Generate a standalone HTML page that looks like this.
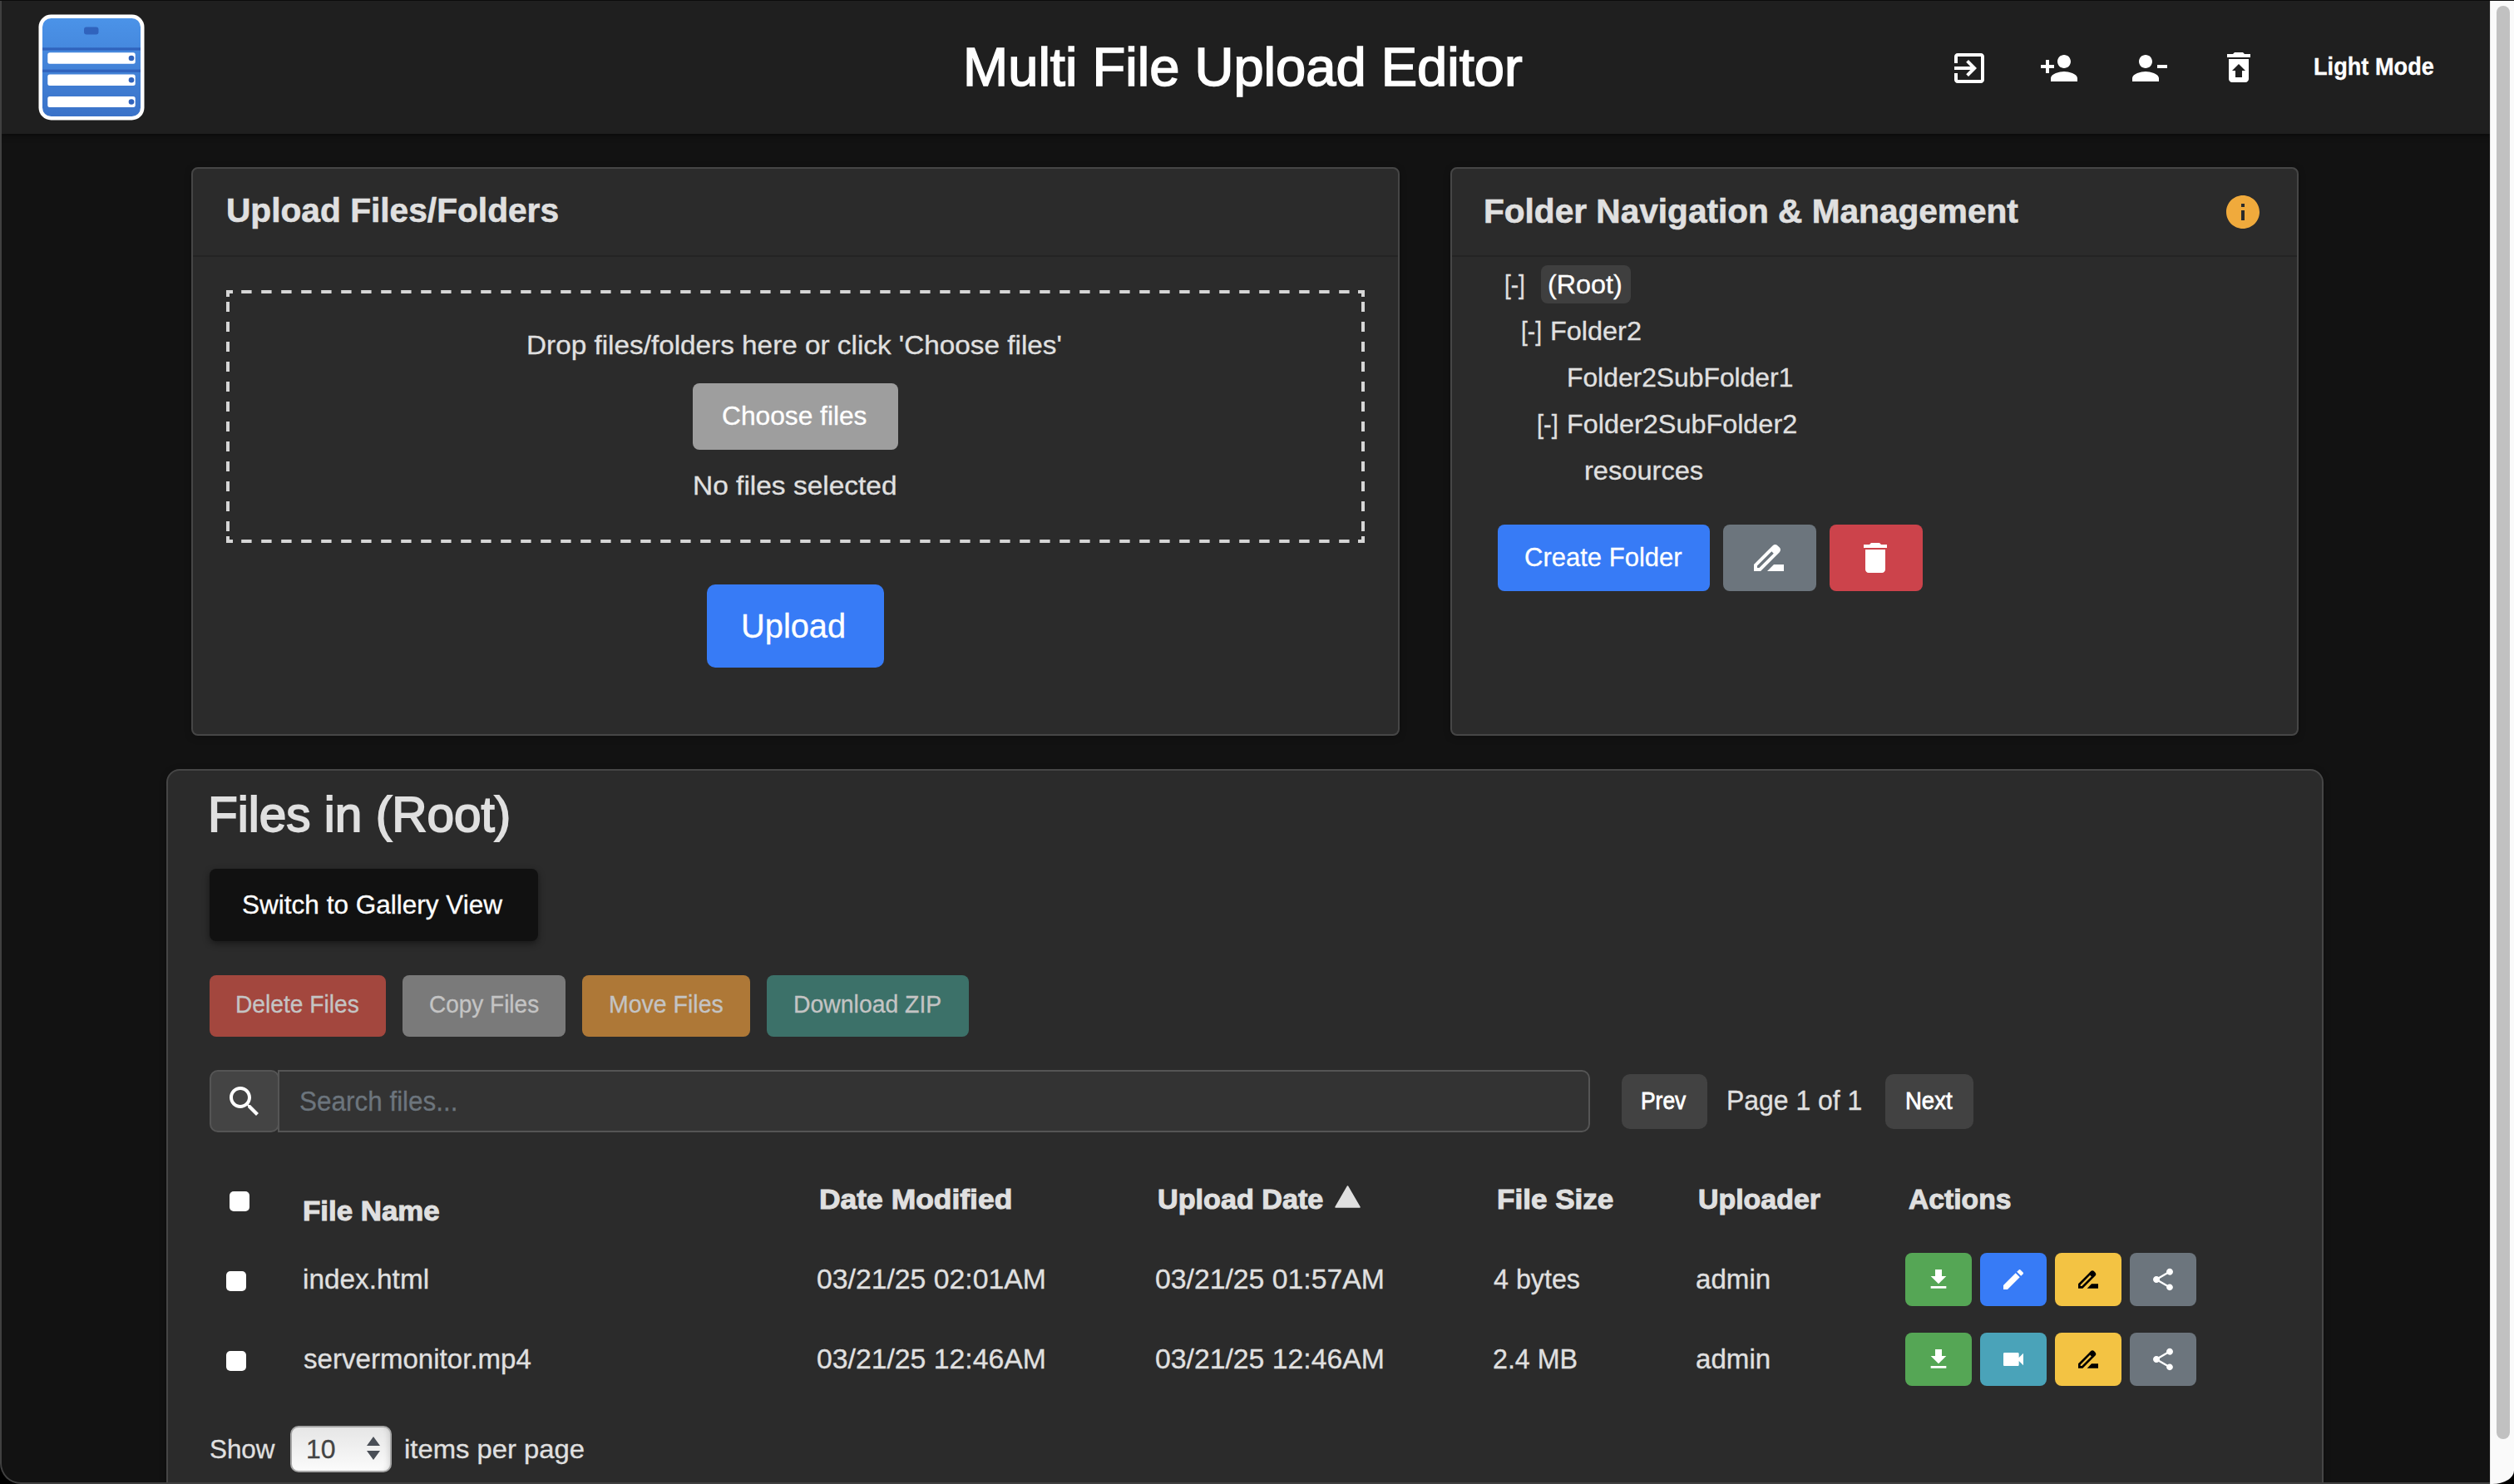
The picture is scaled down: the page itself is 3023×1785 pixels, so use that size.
<!DOCTYPE html>
<html><head><meta charset="utf-8"><title>Multi File Upload Editor</title>
<style>
html,body{margin:0;padding:0;}
body{width:3023px;height:1785px;overflow:hidden;position:relative;background:#121212;font-family:"Liberation Sans",sans-serif;}
body>div{position:absolute;}
.t{white-space:nowrap;-webkit-text-stroke-width:0.3px;}
</style></head><body>
<div style="left:2px;top:1px;width:2992px;height:160px;background:#1f1f1f;box-shadow:0 2px 6px rgba(0,0,0,.5);"></div>
<svg style="position:absolute;left:46px;top:17px" width="128" height="128" viewBox="0 0 128 128">
<defs><linearGradient id="lg" x1="0" y1="0" x2="0" y2="1"><stop offset="0" stop-color="#4b93e8"/><stop offset="1" stop-color="#3a72c8"/></linearGradient></defs>
<rect x="0.5" y="0.5" width="127" height="127" rx="15" fill="#fff"/>
<rect x="5" y="5" width="118" height="118" rx="10.5" fill="url(#lg)"/>
<rect x="55" y="15.5" width="17.5" height="9" rx="3" fill="#3063bd"/>
<rect x="5" y="40.3" width="118" height="3.3" fill="#3063bd"/>
<rect x="5" y="66.6" width="118" height="3.3" fill="#3063bd"/>
<rect x="11.3" y="46.3" width="105.4" height="13.5" rx="2.5" fill="#fff"/>
<rect x="11.3" y="72.6" width="105.4" height="13.5" rx="2.5" fill="#fff"/>
<rect x="11.3" y="98.9" width="105.4" height="13.1" rx="2.5" fill="#fff"/>
<circle cx="112" cy="53" r="3.3" fill="#3063bd"/>
<circle cx="112" cy="79.3" r="3.3" fill="#3063bd"/>
<circle cx="112" cy="105.5" r="3.3" fill="#3063bd"/>
</svg>
<div class="t" id="t0" style="left:1158.20px;top:48.72px;font-size:64px;line-height:64px;font-weight:400;color:#fff;transform:scaleX(1.0168);transform-origin:0 0;-webkit-text-stroke:1.6px #fff;">Multi File Upload Editor</div>
<svg style="position:absolute;left:2344px;top:58px;" width="48" height="48" viewBox="0 0 24 24"><path fill="#fff" d="M10.09 15.59L11.5 17l5-5-5-5-1.41 1.41L12.67 11H3v2h9.67l-2.58 2.59zM19 3H5c-1.11 0-2 .9-2 2v4h2V5h14v14H5v-4H3v4c0 1.1.89 2 2 2h14c1.1 0 2-.9 2-2V5c0-1.1-.9-2-2-2z"/></svg>
<svg style="position:absolute;left:2452px;top:58px;" width="48" height="48" viewBox="0 0 24 24"><path fill="#fff" d="M15 12c2.21 0 4-1.79 4-4s-1.79-4-4-4-4 1.79-4 4 1.79 4 4 4zm-9-2V7H4v3H1v2h3v3h2v-3h3v-2H6zm9 4c-2.67 0-8 1.34-8 4v2h16v-2c0-2.66-5.33-4-8-4z"/></svg>
<svg style="position:absolute;left:2560px;top:58px;" width="48" height="48" viewBox="0 0 24 24"><path fill="#fff" d="M14 8c0-2.21-1.79-4-4-4S6 5.79 6 8s1.79 4 4 4 4-1.79 4-4zm3 2v2h6v-2h-6zM2 18v2h16v-2c0-2.66-5.33-4-8-4s-8 1.34-8 4z"/></svg>
<svg style="position:absolute;left:2668px;top:57px;" width="48" height="48" viewBox="0 0 24 24"><path fill="#fff" d="M19 4h-3.5l-1-1h-5l-1 1H5v2h14zM6 7v12c0 1.1.9 2 2 2h8c1.1 0 2-.9 2-2V7H6zm8 7v4h-4v-4H8l4-4 4 4h-2z"/></svg>
<div class="t" id="t1" style="left:2782.40px;top:64.70px;font-size:30px;line-height:30px;font-weight:700;color:#fff;transform:scaleX(0.9057);transform-origin:0 0;">Light Mode</div>
<div style="left:230px;top:201px;width:1453px;height:684px;background:#2b2b2b;border:2px solid #464646;border-radius:8px;box-sizing:border-box;box-shadow:0 2px 8px rgba(0,0,0,.25);"></div>
<div style="left:232px;top:306.5px;width:1449px;height:2px;background:#242424;"></div>
<div class="t" id="t2" style="left:271.80px;top:233.14px;font-size:40px;line-height:40px;font-weight:700;color:#e0e0e0;transform:scaleX(1.0169);transform-origin:0 0;-webkit-text-stroke-width:0.6px;">Upload Files/Folders</div>
<svg style="position:absolute;left:272px;top:349px" width="1369" height="304" viewBox="0 0 1369 304"><g fill="#d6d6d6"><rect x="18.2" y="0" width="12.4" height="4"/><rect x="18.2" y="300" width="12.4" height="4"/><rect x="42.2" y="0" width="12.4" height="4"/><rect x="42.2" y="300" width="12.4" height="4"/><rect x="66.2" y="0" width="12.4" height="4"/><rect x="66.2" y="300" width="12.4" height="4"/><rect x="90.2" y="0" width="12.4" height="4"/><rect x="90.2" y="300" width="12.4" height="4"/><rect x="114.2" y="0" width="12.4" height="4"/><rect x="114.2" y="300" width="12.4" height="4"/><rect x="138.2" y="0" width="12.4" height="4"/><rect x="138.2" y="300" width="12.4" height="4"/><rect x="162.2" y="0" width="12.4" height="4"/><rect x="162.2" y="300" width="12.4" height="4"/><rect x="186.2" y="0" width="12.4" height="4"/><rect x="186.2" y="300" width="12.4" height="4"/><rect x="210.2" y="0" width="12.4" height="4"/><rect x="210.2" y="300" width="12.4" height="4"/><rect x="234.2" y="0" width="12.4" height="4"/><rect x="234.2" y="300" width="12.4" height="4"/><rect x="258.2" y="0" width="12.4" height="4"/><rect x="258.2" y="300" width="12.4" height="4"/><rect x="282.2" y="0" width="12.4" height="4"/><rect x="282.2" y="300" width="12.4" height="4"/><rect x="306.2" y="0" width="12.4" height="4"/><rect x="306.2" y="300" width="12.4" height="4"/><rect x="330.2" y="0" width="12.4" height="4"/><rect x="330.2" y="300" width="12.4" height="4"/><rect x="354.2" y="0" width="12.4" height="4"/><rect x="354.2" y="300" width="12.4" height="4"/><rect x="378.2" y="0" width="12.4" height="4"/><rect x="378.2" y="300" width="12.4" height="4"/><rect x="402.2" y="0" width="12.4" height="4"/><rect x="402.2" y="300" width="12.4" height="4"/><rect x="426.2" y="0" width="12.4" height="4"/><rect x="426.2" y="300" width="12.4" height="4"/><rect x="450.2" y="0" width="12.4" height="4"/><rect x="450.2" y="300" width="12.4" height="4"/><rect x="474.2" y="0" width="12.4" height="4"/><rect x="474.2" y="300" width="12.4" height="4"/><rect x="498.2" y="0" width="12.4" height="4"/><rect x="498.2" y="300" width="12.4" height="4"/><rect x="522.2" y="0" width="12.4" height="4"/><rect x="522.2" y="300" width="12.4" height="4"/><rect x="546.2" y="0" width="12.4" height="4"/><rect x="546.2" y="300" width="12.4" height="4"/><rect x="570.2" y="0" width="12.4" height="4"/><rect x="570.2" y="300" width="12.4" height="4"/><rect x="594.2" y="0" width="12.4" height="4"/><rect x="594.2" y="300" width="12.4" height="4"/><rect x="618.2" y="0" width="12.4" height="4"/><rect x="618.2" y="300" width="12.4" height="4"/><rect x="642.2" y="0" width="12.4" height="4"/><rect x="642.2" y="300" width="12.4" height="4"/><rect x="666.2" y="0" width="12.4" height="4"/><rect x="666.2" y="300" width="12.4" height="4"/><rect x="690.2" y="0" width="12.4" height="4"/><rect x="690.2" y="300" width="12.4" height="4"/><rect x="714.2" y="0" width="12.4" height="4"/><rect x="714.2" y="300" width="12.4" height="4"/><rect x="738.2" y="0" width="12.4" height="4"/><rect x="738.2" y="300" width="12.4" height="4"/><rect x="762.2" y="0" width="12.4" height="4"/><rect x="762.2" y="300" width="12.4" height="4"/><rect x="786.2" y="0" width="12.4" height="4"/><rect x="786.2" y="300" width="12.4" height="4"/><rect x="810.2" y="0" width="12.4" height="4"/><rect x="810.2" y="300" width="12.4" height="4"/><rect x="834.2" y="0" width="12.4" height="4"/><rect x="834.2" y="300" width="12.4" height="4"/><rect x="858.2" y="0" width="12.4" height="4"/><rect x="858.2" y="300" width="12.4" height="4"/><rect x="882.2" y="0" width="12.4" height="4"/><rect x="882.2" y="300" width="12.4" height="4"/><rect x="906.2" y="0" width="12.4" height="4"/><rect x="906.2" y="300" width="12.4" height="4"/><rect x="930.2" y="0" width="12.4" height="4"/><rect x="930.2" y="300" width="12.4" height="4"/><rect x="954.2" y="0" width="12.4" height="4"/><rect x="954.2" y="300" width="12.4" height="4"/><rect x="978.2" y="0" width="12.4" height="4"/><rect x="978.2" y="300" width="12.4" height="4"/><rect x="1002.2" y="0" width="12.4" height="4"/><rect x="1002.2" y="300" width="12.4" height="4"/><rect x="1026.2" y="0" width="12.4" height="4"/><rect x="1026.2" y="300" width="12.4" height="4"/><rect x="1050.2" y="0" width="12.4" height="4"/><rect x="1050.2" y="300" width="12.4" height="4"/><rect x="1074.2" y="0" width="12.4" height="4"/><rect x="1074.2" y="300" width="12.4" height="4"/><rect x="1098.2" y="0" width="12.4" height="4"/><rect x="1098.2" y="300" width="12.4" height="4"/><rect x="1122.2" y="0" width="12.4" height="4"/><rect x="1122.2" y="300" width="12.4" height="4"/><rect x="1146.2" y="0" width="12.4" height="4"/><rect x="1146.2" y="300" width="12.4" height="4"/><rect x="1170.2" y="0" width="12.4" height="4"/><rect x="1170.2" y="300" width="12.4" height="4"/><rect x="1194.2" y="0" width="12.4" height="4"/><rect x="1194.2" y="300" width="12.4" height="4"/><rect x="1218.2" y="0" width="12.4" height="4"/><rect x="1218.2" y="300" width="12.4" height="4"/><rect x="1242.2" y="0" width="12.4" height="4"/><rect x="1242.2" y="300" width="12.4" height="4"/><rect x="1266.2" y="0" width="12.4" height="4"/><rect x="1266.2" y="300" width="12.4" height="4"/><rect x="1290.2" y="0" width="12.4" height="4"/><rect x="1290.2" y="300" width="12.4" height="4"/><rect x="1314.2" y="0" width="12.4" height="4"/><rect x="1314.2" y="300" width="12.4" height="4"/><rect x="1338.2" y="0" width="12.4" height="4"/><rect x="1338.2" y="300" width="12.4" height="4"/><rect x="0" y="14.0" width="4" height="12"/><rect x="1365" y="14.0" width="4" height="12"/><rect x="0" y="38.0" width="4" height="12"/><rect x="1365" y="38.0" width="4" height="12"/><rect x="0" y="62.0" width="4" height="12"/><rect x="1365" y="62.0" width="4" height="12"/><rect x="0" y="86.0" width="4" height="12"/><rect x="1365" y="86.0" width="4" height="12"/><rect x="0" y="110.0" width="4" height="12"/><rect x="1365" y="110.0" width="4" height="12"/><rect x="0" y="134.0" width="4" height="12"/><rect x="1365" y="134.0" width="4" height="12"/><rect x="0" y="158.0" width="4" height="12"/><rect x="1365" y="158.0" width="4" height="12"/><rect x="0" y="182.0" width="4" height="12"/><rect x="1365" y="182.0" width="4" height="12"/><rect x="0" y="206.0" width="4" height="12"/><rect x="1365" y="206.0" width="4" height="12"/><rect x="0" y="230.0" width="4" height="12"/><rect x="1365" y="230.0" width="4" height="12"/><rect x="0" y="254.0" width="4" height="12"/><rect x="1365" y="254.0" width="4" height="12"/><rect x="0" y="278.0" width="4" height="12"/><rect x="1365" y="278.0" width="4" height="12"/><path d="M0 0H8V4H4V8H0Z M1361 0H1369V8H1365V4H1361Z M0 296H4V300H8V304H0Z M1365 296H1369V304H1361V300H1365Z"/></g></svg>
<div class="t" id="t3" style="left:633.20px;top:399.41px;font-size:32px;line-height:32px;font-weight:400;color:#e0e0e0;transform:scaleX(1.0406);transform-origin:0 0;">Drop files/folders here or click 'Choose files'</div>
<div style="left:833px;top:461px;width:247px;height:80px;background:#9e9e9e;border-radius:8px;"></div>
<div class="t" id="t4" style="left:868.40px;top:483.81px;font-size:32px;line-height:32px;font-weight:400;color:#fff;transform:scaleX(0.9908);transform-origin:0 0;">Choose files</div>
<div class="t" id="t5" style="left:833.00px;top:567.71px;font-size:32px;line-height:32px;font-weight:400;color:#e0e0e0;transform:scaleX(1.0459);transform-origin:0 0;">No files selected</div>
<div style="left:850px;top:703px;width:213px;height:100px;background:#377bf6;border-radius:10px;"></div>
<div class="t" id="t6" style="left:891.20px;top:733.24px;font-size:40px;line-height:40px;font-weight:400;color:#fff;transform:scaleX(0.9951);transform-origin:0 0;">Upload</div>
<div style="left:1744px;top:201px;width:1020px;height:684px;background:#2b2b2b;border:2px solid #464646;border-radius:8px;box-sizing:border-box;box-shadow:0 2px 8px rgba(0,0,0,.25);"></div>
<div style="left:1746px;top:306.5px;width:1016px;height:2px;background:#242424;"></div>
<div class="t" id="t7" style="left:1784.40px;top:233.64px;font-size:40px;line-height:40px;font-weight:700;color:#e0e0e0;transform:scaleX(1.0149);transform-origin:0 0;-webkit-text-stroke-width:0.6px;">Folder Navigation &amp; Management</div>
<svg style="position:absolute;left:2673px;top:231px;" width="48" height="48" viewBox="0 0 24 24"><path fill="#f0aa3c" d="M12 2C6.48 2 2 6.48 2 12s4.48 10 10 10 10-4.48 10-10S17.52 2 12 2zm1 15h-2v-6h2v6zm0-8h-2V7h2v2z"/></svg>
<div class="t" id="t8" style="left:1808.80px;top:326.21px;font-size:32px;line-height:32px;font-weight:400;color:#e0e0e0;transform:scaleX(0.8730);transform-origin:0 0;">[-]</div>
<div style="left:1853px;top:319px;width:108px;height:46px;background:#3f3f3f;border-radius:8px;"></div>
<div class="t" id="t9" style="left:1861.20px;top:326.21px;font-size:32px;line-height:32px;font-weight:400;color:#fff;transform:scaleX(1.0093);transform-origin:0 0;">(Root)</div>
<div class="t" id="t10" style="left:1829.00px;top:381.91px;font-size:32px;line-height:32px;font-weight:400;color:#e0e0e0;transform:scaleX(0.8813);transform-origin:0 0;">[-]</div>
<div class="t" id="t11" style="left:1864.40px;top:381.91px;font-size:32px;line-height:32px;font-weight:400;color:#e0e0e0;transform:scaleX(1.0133);transform-origin:0 0;">Folder2</div>
<div class="t" id="t12" style="left:1883.80px;top:438.21px;font-size:32px;line-height:32px;font-weight:400;color:#e0e0e0;transform:scaleX(0.9941);transform-origin:0 0;">Folder2SubFolder1</div>
<div class="t" id="t13" style="left:1848.40px;top:493.91px;font-size:32px;line-height:32px;font-weight:400;color:#e0e0e0;transform:scaleX(0.9056);transform-origin:0 0;">[-]</div>
<div class="t" id="t14" style="left:1883.80px;top:493.91px;font-size:32px;line-height:32px;font-weight:400;color:#e0e0e0;transform:scaleX(1.0118);transform-origin:0 0;">Folder2SubFolder2</div>
<div class="t" id="t15" style="left:1905.00px;top:549.91px;font-size:32px;line-height:32px;font-weight:400;color:#e0e0e0;transform:scaleX(1.0188);transform-origin:0 0;">resources</div>
<div style="left:1801px;top:631px;width:255px;height:80px;background:#377bf6;border-radius:8px;"></div>
<div class="t" id="t16" style="left:1833.00px;top:654.21px;font-size:32px;line-height:32px;font-weight:400;color:#fff;transform:scaleX(0.9692);transform-origin:0 0;">Create Folder</div>
<div style="left:2072px;top:631px;width:112px;height:80px;background:#6c757d;border-radius:8px;"></div>
<svg style="position:absolute;left:2103px;top:647px;" width="48" height="48" viewBox="0 0 24 24"><path fill="#fff" d="M18.41 5.8L17.2 4.59c-.78-.78-2.05-.78-2.83 0l-2.68 2.68L3 15.96V20h4.04l8.74-8.74 2.63-2.63c.79-.78.79-2.05 0-2.83zM6.21 18H5v-1.21l8.66-8.66 1.21 1.21L6.21 18zM11 20l4-4h6v4H11z"/></svg>
<div style="left:2200px;top:631px;width:112px;height:80px;background:#cc434b;border-radius:8px;"></div>
<svg style="position:absolute;left:2231px;top:647px;" width="48" height="48" viewBox="0 0 24 24"><path fill="#fff" d="M6 19c0 1.1.9 2 2 2h8c1.1 0 2-.9 2-2V7H6v12zM19 4h-3.5l-1-1h-5l-1 1H5v2h14V4z"/></svg>
<div style="left:200px;top:925px;width:2594px;height:900px;background:#2b2b2b;border:2px solid #464646;border-radius:16px;box-sizing:border-box;box-shadow:0 2px 8px rgba(0,0,0,.25);"></div>
<div class="t" id="t17" style="left:250.00px;top:951.06px;font-size:59px;line-height:59px;font-weight:400;color:#e0e0e0;transform:scaleX(0.9920);transform-origin:0 0;-webkit-text-stroke:1.8px #e0e0e0;">Files in (Root)</div>
<div style="left:252px;top:1045px;width:395px;height:87px;background:#111;border-radius:8px;box-shadow:0 3px 8px rgba(0,0,0,.45);"></div>
<div class="t" id="t18" style="left:291.40px;top:1071.71px;font-size:32px;line-height:32px;font-weight:400;color:#fff;transform:scaleX(0.9855);transform-origin:0 0;">Switch to Gallery View</div>
<div style="left:252px;top:1173px;width:212px;height:74px;background:#a3473e;border-radius:8px;"></div>
<div class="t" id="t19" style="left:283.10px;top:1194.25px;font-size:29px;line-height:29px;font-weight:400;color:#c4c4c4;transform:scaleX(0.9722);transform-origin:0 0;">Delete Files</div>
<div style="left:484px;top:1173px;width:196px;height:74px;background:#7a7a7a;border-radius:8px;"></div>
<div class="t" id="t20" style="left:515.90px;top:1194.25px;font-size:29px;line-height:29px;font-weight:400;color:#c4c4c4;transform:scaleX(0.9645);transform-origin:0 0;">Copy Files</div>
<div style="left:700px;top:1173px;width:202px;height:74px;background:#ae7837;border-radius:8px;"></div>
<div class="t" id="t21" style="left:731.80px;top:1194.25px;font-size:29px;line-height:29px;font-weight:400;color:#c4c4c4;transform:scaleX(0.9826);transform-origin:0 0;">Move Files</div>
<div style="left:922px;top:1173px;width:243px;height:74px;background:#3c7169;border-radius:8px;"></div>
<div class="t" id="t22" style="left:953.60px;top:1194.25px;font-size:29px;line-height:29px;font-weight:400;color:#c4c4c4;transform:scaleX(0.9788);transform-origin:0 0;">Download ZIP</div>
<div style="left:334px;top:1287px;width:1578px;height:75px;background:#333;border:2px solid #555;border-radius:0 10px 10px 0;box-sizing:border-box;"></div>
<div style="left:252px;top:1287px;width:84px;height:75px;background:#444;border:2px solid #555;border-radius:10px;box-sizing:border-box;"></div>
<svg style="position:absolute;left:270px;top:1301px;" width="48" height="48" viewBox="0 0 24 24"><path fill="#fff" d="M15.5 14h-.79l-.28-.27C15.41 12.59 16 11.11 16 9.5 16 5.91 13.09 3 9.5 3S3 5.91 3 9.5 5.91 16 9.5 16c1.61 0 3.09-.59 4.23-1.57l.27.28v.79l5 4.99L20.49 19l-4.99-5zm-6 0C7.01 14 5 11.99 5 9.5S7.01 5 9.5 5 14 7.01 14 9.5 11.99 14 9.5 14z"/></svg>
<div class="t" id="t23" style="left:359.80px;top:1308.17px;font-size:33px;line-height:33px;font-weight:400;color:#6c757d;transform:scaleX(0.9531);transform-origin:0 0;">Search files...</div>
<div style="left:1950px;top:1292px;width:103px;height:66px;background:#424242;border-radius:10px;"></div>
<div class="t" id="t24" style="left:1973.20px;top:1309.11px;font-size:30px;line-height:30px;font-weight:400;color:#fff;transform:scaleX(0.8806);transform-origin:0 0;-webkit-text-stroke-width:0.8px;">Prev</div>
<div class="t" id="t25" style="left:2076.20px;top:1307.27px;font-size:33px;line-height:33px;font-weight:400;color:#e0e0e0;transform:scaleX(0.9675);transform-origin:0 0;">Page 1 of 1</div>
<div style="left:2267px;top:1292px;width:106px;height:66px;background:#424242;border-radius:10px;"></div>
<div class="t" id="t26" style="left:2291.00px;top:1309.11px;font-size:30px;line-height:30px;font-weight:400;color:#fff;transform:scaleX(0.9173);transform-origin:0 0;-webkit-text-stroke-width:0.8px;">Next</div>
<div style="left:276px;top:1433px;width:24px;height:24px;background:#fff;border-radius:5px;"></div>
<div class="t" id="t27" style="left:364.20px;top:1438.72px;font-size:34px;line-height:34px;font-weight:700;color:#e0e0e0;transform:scaleX(1.0255);transform-origin:0 0;-webkit-text-stroke-width:1px;">File Name</div>
<div class="t" id="t28" style="left:984.80px;top:1424.72px;font-size:34px;line-height:34px;font-weight:700;color:#e0e0e0;transform:scaleX(1.0421);transform-origin:0 0;-webkit-text-stroke-width:1px;">Date Modified</div>
<div class="t" id="t29" style="left:1392.20px;top:1424.72px;font-size:34px;line-height:34px;font-weight:700;color:#e0e0e0;transform:scaleX(1.0051);transform-origin:0 0;-webkit-text-stroke-width:1px;">Upload Date</div>
<svg style="position:absolute;left:1605px;top:1426px" width="31" height="27" viewBox="0 0 31 27"><path fill="#e0e0e0" stroke="#e0e0e0" stroke-width="1.5" stroke-linejoin="round" d="M15.5 1L30 26H1z"/></svg>
<div class="t" id="t30" style="left:1800.20px;top:1424.72px;font-size:34px;line-height:34px;font-weight:700;color:#e0e0e0;transform:scaleX(1.0315);transform-origin:0 0;-webkit-text-stroke-width:1px;">File Size</div>
<div class="t" id="t31" style="left:2042.40px;top:1424.72px;font-size:34px;line-height:34px;font-weight:700;color:#e0e0e0;transform:scaleX(0.9973);transform-origin:0 0;-webkit-text-stroke-width:1px;">Uploader</div>
<div class="t" id="t32" style="left:2295.20px;top:1424.72px;font-size:34px;line-height:34px;font-weight:700;color:#e0e0e0;transform:scaleX(0.9904);transform-origin:0 0;-webkit-text-stroke-width:1px;">Actions</div>
<div style="left:272px;top:1528.6px;width:24px;height:24px;background:#fff;border-radius:5px;"></div>
<div class="t" id="t33" style="left:364.20px;top:1520.92px;font-size:34px;line-height:34px;font-weight:400;color:#e0e0e0;transform:scaleX(0.9816);transform-origin:0 0;">index.html</div>
<div class="t" id="t34" style="left:982.00px;top:1520.92px;font-size:34px;line-height:34px;font-weight:400;color:#e0e0e0;transform:scaleX(0.9927);transform-origin:0 0;">03/21/25 02:01AM</div>
<div class="t" id="t35" style="left:1388.60px;top:1520.92px;font-size:34px;line-height:34px;font-weight:400;color:#e0e0e0;transform:scaleX(0.9928);transform-origin:0 0;">03/21/25 01:57AM</div>
<div class="t" id="t36" style="left:1795.80px;top:1520.92px;font-size:34px;line-height:34px;font-weight:400;color:#e0e0e0;transform:scaleX(0.9486);transform-origin:0 0;">4 bytes</div>
<div class="t" id="t37" style="left:2039.00px;top:1520.92px;font-size:34px;line-height:34px;font-weight:400;color:#e0e0e0;transform:scaleX(0.9734);transform-origin:0 0;">admin</div>
<div style="left:2291px;top:1507px;width:80px;height:64px;background:#55a655;border-radius:8px;"></div>
<svg style="position:absolute;left:2315px;top:1523px;" width="32" height="32" viewBox="0 0 24 24"><path fill="#fff" d="M5 20h14v-2H5v2zM19 9h-4V3H9v6H5l7 7 7-7z"/></svg>
<div style="left:2381px;top:1507px;width:80px;height:64px;background:#377bf6;border-radius:8px;"></div>
<svg style="position:absolute;left:2405px;top:1523px;" width="32" height="32" viewBox="0 0 24 24"><path fill="#fff" d="M3 17.25V21h3.75L17.81 9.94l-3.75-3.75L3 17.25zM20.71 7.04c.39-.39.39-1.02 0-1.41l-2.34-2.34c-.39-.39-1.02-.39-1.41 0l-1.83 1.83 3.75 3.75 1.83-1.83z"/></svg>
<div style="left:2471px;top:1507px;width:80px;height:64px;background:#f3c343;border-radius:8px;"></div>
<svg style="position:absolute;left:2495px;top:1523px;" width="32" height="32" viewBox="0 0 24 24"><path fill="#000" d="M18.41 5.8L17.2 4.59c-.78-.78-2.05-.78-2.83 0l-2.68 2.68L3 15.96V20h4.04l8.74-8.74 2.63-2.63c.79-.78.79-2.05 0-2.83zM6.21 18H5v-1.21l8.66-8.66 1.21 1.21L6.21 18zM11 20l4-4h6v4H11z"/></svg>
<div style="left:2561px;top:1507px;width:80px;height:64px;background:#6c757d;border-radius:8px;"></div>
<svg style="position:absolute;left:2585px;top:1523px;" width="32" height="32" viewBox="0 0 24 24"><path fill="#fff" d="M18 16.08c-.76 0-1.44.3-1.96.77L8.91 12.7c.05-.23.09-.46.09-.7s-.04-.47-.09-.7l7.05-4.11c.54.5 1.25.81 2.04.81 1.66 0 3-1.34 3-3s-1.34-3-3-3-3 1.34-3 3c0 .24.04.47.09.7L8.04 9.81C7.5 9.31 6.79 9 6 9c-1.66 0-3 1.34-3 3s1.34 3 3 3c.79 0 1.5-.31 2.04-.81l7.12 4.16c-.05.21-.08.43-.08.65 0 1.61 1.31 2.92 2.92 2.92 1.61 0 2.92-1.31 2.92-2.92s-1.31-2.92-2.92-2.92z"/></svg>
<div style="left:272px;top:1624.7px;width:24px;height:24px;background:#fff;border-radius:5px;"></div>
<div class="t" id="t38" style="left:365.20px;top:1617.02px;font-size:34px;line-height:34px;font-weight:400;color:#e0e0e0;transform:scaleX(0.9729);transform-origin:0 0;">servermonitor.mp4</div>
<div class="t" id="t39" style="left:982.00px;top:1617.02px;font-size:34px;line-height:34px;font-weight:400;color:#e0e0e0;transform:scaleX(0.9927);transform-origin:0 0;">03/21/25 12:46AM</div>
<div class="t" id="t40" style="left:1388.60px;top:1617.02px;font-size:34px;line-height:34px;font-weight:400;color:#e0e0e0;transform:scaleX(0.9928);transform-origin:0 0;">03/21/25 12:46AM</div>
<div class="t" id="t41" style="left:1794.80px;top:1617.02px;font-size:34px;line-height:34px;font-weight:400;color:#e0e0e0;transform:scaleX(0.9472);transform-origin:0 0;">2.4 MB</div>
<div class="t" id="t42" style="left:2039.00px;top:1617.02px;font-size:34px;line-height:34px;font-weight:400;color:#e0e0e0;transform:scaleX(0.9734);transform-origin:0 0;">admin</div>
<div style="left:2291px;top:1603px;width:80px;height:64px;background:#55a655;border-radius:8px;"></div>
<svg style="position:absolute;left:2315px;top:1619px;" width="32" height="32" viewBox="0 0 24 24"><path fill="#fff" d="M5 20h14v-2H5v2zM19 9h-4V3H9v6H5l7 7 7-7z"/></svg>
<div style="left:2381px;top:1603px;width:80px;height:64px;background:#4aa3b9;border-radius:8px;"></div>
<svg style="position:absolute;left:2405px;top:1619px;" width="32" height="32" viewBox="0 0 24 24"><path fill="#fff" d="M17 10.5V7c0-.55-.45-1-1-1H4c-.55 0-1 .45-1 1v10c0 .55.45 1 1 1h12c.55 0 1-.45 1-1v-3.5l4 4v-11l-4 4z"/></svg>
<div style="left:2471px;top:1603px;width:80px;height:64px;background:#f3c343;border-radius:8px;"></div>
<svg style="position:absolute;left:2495px;top:1619px;" width="32" height="32" viewBox="0 0 24 24"><path fill="#000" d="M18.41 5.8L17.2 4.59c-.78-.78-2.05-.78-2.83 0l-2.68 2.68L3 15.96V20h4.04l8.74-8.74 2.63-2.63c.79-.78.79-2.05 0-2.83zM6.21 18H5v-1.21l8.66-8.66 1.21 1.21L6.21 18zM11 20l4-4h6v4H11z"/></svg>
<div style="left:2561px;top:1603px;width:80px;height:64px;background:#6c757d;border-radius:8px;"></div>
<svg style="position:absolute;left:2585px;top:1619px;" width="32" height="32" viewBox="0 0 24 24"><path fill="#fff" d="M18 16.08c-.76 0-1.44.3-1.96.77L8.91 12.7c.05-.23.09-.46.09-.7s-.04-.47-.09-.7l7.05-4.11c.54.5 1.25.81 2.04.81 1.66 0 3-1.34 3-3s-1.34-3-3-3-3 1.34-3 3c0 .24.04.47.09.7L8.04 9.81C7.5 9.31 6.79 9 6 9c-1.66 0-3 1.34-3 3s1.34 3 3 3c.79 0 1.5-.31 2.04-.81l7.12 4.16c-.05.21-.08.43-.08.65 0 1.61 1.31 2.92 2.92 2.92 1.61 0 2.92-1.31 2.92-2.92s-1.31-2.92-2.92-2.92z"/></svg>
<div class="t" id="t43" style="left:251.80px;top:1727.01px;font-size:32px;line-height:32px;font-weight:400;color:#e0e0e0;transform:scaleX(0.9802);transform-origin:0 0;">Show</div>
<div style="left:349px;top:1715px;width:122px;height:56px;background:linear-gradient(#e6e6e6,#fbfbfb);border:2px solid #a6a6a6;border-radius:10px;box-sizing:border-box;box-shadow:inset -6px 0 6px -4px rgba(0,0,0,.12);"></div>
<div class="t" id="t44" style="left:368.00px;top:1726.91px;font-size:32px;line-height:32px;font-weight:400;color:#444;">10</div>
<svg style="position:absolute;left:441px;top:1728px" width="16" height="30" viewBox="0 0 16 30"><path fill="#4a4f57" d="M8 0L16 11H0z M0 17H16L8 28z"/></svg>
<div class="t" id="t45" style="left:486.00px;top:1727.01px;font-size:32px;line-height:32px;font-weight:400;color:#e0e0e0;transform:scaleX(1.0257);transform-origin:0 0;">items per page</div>
<div style="left:0px;top:0px;width:2px;height:1785px;background:#404040;"></div>
<div style="left:0px;top:1783px;width:2994px;height:2px;background:#404040;"></div>
<div style="left:2994px;top:0px;width:29px;height:1785px;background:#fafafa;border-left:1px solid #e4e4e4;box-sizing:border-box;"></div>
<div style="left:3002px;top:7px;width:16px;height:1724px;background:#c1c1c1;border-radius:8px;"></div>
<div style="left:0px;top:0px;width:3023px;height:1px;background:#0c0c0c;"></div>
<svg style="position:absolute;left:0;top:1755px" width="30" height="30" viewBox="0 0 30 30"><path d="M0 0V30H30V28H25A23 23 0 0 1 2 5V0Z" fill="#000"/><path d="M2 0V5A23 23 0 0 0 25 28H30V30H25A25 25 0 0 1 0 5V0Z" fill="#404040"/></svg>
<svg style="position:absolute;left:2993px;top:1755px" width="30" height="30" viewBox="0 0 30 30"><path d="M30 14V30H4A26 16 0 0 0 30 14Z" fill="#000"/></svg>
</body></html>
